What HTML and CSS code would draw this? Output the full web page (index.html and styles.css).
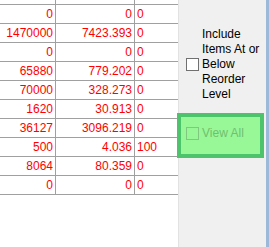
FILE: index.html
```html
<!DOCTYPE html>
<html lang="en">
  <head>
    <meta charset="UTF-8" />
    <meta name="viewport" content="width=device-width, initial-scale=1.0" />
    <title>Reorder Items</title>
    <link rel="stylesheet" href="styles.css">
  </head>
  <body>
    <div class="window">
      <div class="grid-area">
        <table class="grid">
          <tr class="cut-row">
            <td class="c1"></td><td class="c2"></td><td class="c3"></td>
          </tr>
          <tr><td class="c1">0</td><td class="c2">0</td><td class="c3">0</td></tr>
          <tr><td class="c1">1470000</td><td class="c2">7423.393</td><td class="c3">0</td></tr>
          <tr><td class="c1">0</td><td class="c2">0</td><td class="c3">0</td></tr>
          <tr><td class="c1">65880</td><td class="c2">779.202</td><td class="c3">0</td></tr>
          <tr><td class="c1">70000</td><td class="c2">328.273</td><td class="c3">0</td></tr>
          <tr><td class="c1">1620</td><td class="c2">30.913</td><td class="c3">0</td></tr>
          <tr><td class="c1">36127</td><td class="c2">3096.219</td><td class="c3">0</td></tr>
          <tr><td class="c1">500</td><td class="c2">4.036</td><td class="c3">100</td></tr>
          <tr><td class="c1">8064</td><td class="c2">80.359</td><td class="c3">0</td></tr>
          <tr><td class="c1">0</td><td class="c2">0</td><td class="c3">0</td></tr>
        </table>
      </div>

      <div class="side-panel">
        <label class="check-row">
          <input type="checkbox" class="check" />
          <span class="check-text">Include Items At or Below Reorder Level</span>
        </label>

        <div class="view-all-box">
          <label class="check-row disabled">
            <input type="checkbox" class="check" disabled />
            <span class="check-text">View All</span>
          </label>
        </div>
      </div>

      <div class="edge"></div>
    </div>
  </body>
</html>
```

FILE: styles.css
```css
body {
  margin: 0;
  font-family: "Liberation Sans", Arial, sans-serif;
  font-size: 12px;
  background: white;
}
.window {
  display: flex;
  height: 247px;
  overflow: hidden;
}
.grid-area {
  width: 178px;
  background: white;
}
.grid {
  border-collapse: separate;
  border-spacing: 0;
  table-layout: fixed;
  width: 178px;
}
.grid td {
  box-sizing: border-box;
  height: 19px;
  padding: 0 2px;
  line-height: 18px;
  color: #ff0000;
  border-bottom: 1px solid #a0a0a0;
  border-right: 1px solid #a0a0a0;
  white-space: nowrap;
  overflow: hidden;
}
.grid .cut-row td {
  height: 5px;
  font-size: 0;
  line-height: 0;
}
.c1 {
  width: 56px;
  text-align: right;
}
.c2 {
  width: 79px;
  text-align: right;
}
.grid td.c3 {
  width: 43px;
  text-align: left;
  border-right: none;
}
.side-panel {
  width: 88px;
  background: #f0f0f0;
  border-left: 1px solid #e2e2e2;
  padding-top: 27px;
  box-sizing: border-box;
}
.check-row {
  display: flex;
  align-items: center;
  padding-left: 7px;
  color: black;
  line-height: 15px;
}
.check {
  appearance: none;
  width: 13px;
  height: 13px;
  margin: 0 3px 0 0;
  border: 1px solid #707070;
  background: white;
  flex-shrink: 0;
}
.check-text {
  width: 62px;
}
.view-all-box {
  margin: 11px 0 0 -2px;
  width: 87px;
  height: 45px;
  box-sizing: border-box;
  border: 4px solid #4dc36c;
  background: #98f898;
  padding-top: 9px;
}
.view-all-box .check-row {
  padding-left: 5px;
}
.disabled {
  color: #6fc06f;
}
.disabled .check {
  background: transparent;
  border-color: #80c880;
}
.edge {
  width: 3px;
  background: #9cb9d9;
}
```
